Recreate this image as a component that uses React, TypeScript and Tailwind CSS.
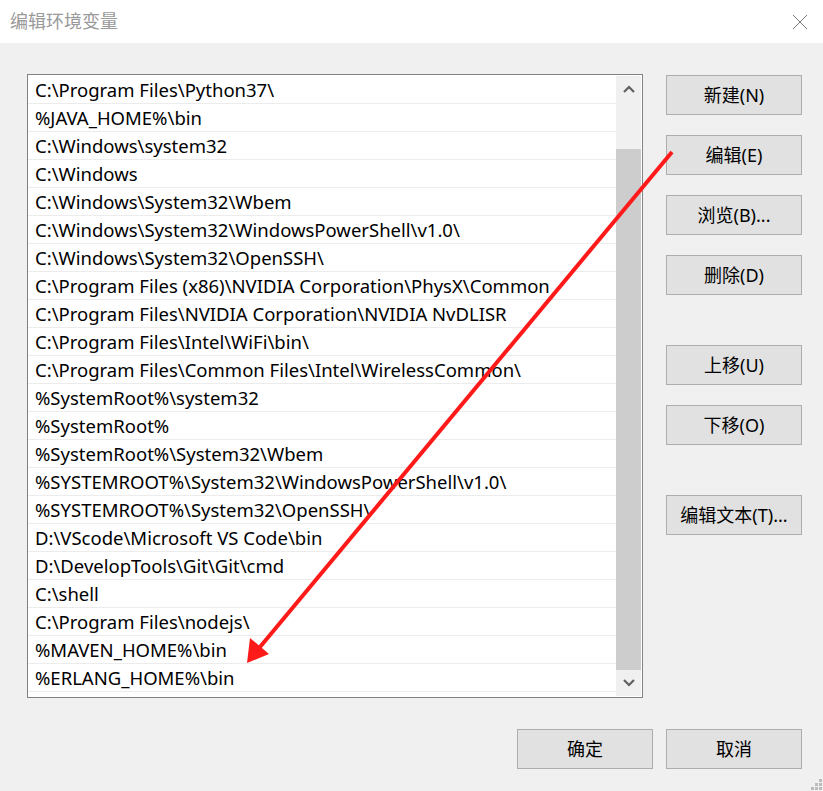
import React from "react";

const paths = [
  "C:\\Program Files\\Python37\\",
  "%JAVA_HOME%\\bin",
  "C:\\Windows\\system32",
  "C:\\Windows",
  "C:\\Windows\\System32\\Wbem",
  "C:\\Windows\\System32\\WindowsPowerShell\\v1.0\\",
  "C:\\Windows\\System32\\OpenSSH\\",
  "C:\\Program Files (x86)\\NVIDIA Corporation\\PhysX\\Common",
  "C:\\Program Files\\NVIDIA Corporation\\NVIDIA NvDLISR",
  "C:\\Program Files\\Intel\\WiFi\\bin\\",
  "C:\\Program Files\\Common Files\\Intel\\WirelessCommon\\",
  "%SystemRoot%\\system32",
  "%SystemRoot%",
  "%SystemRoot%\\System32\\Wbem",
  "%SYSTEMROOT%\\System32\\WindowsPowerShell\\v1.0\\",
  "%SYSTEMROOT%\\System32\\OpenSSH\\",
  "D:\\VScode\\Microsoft VS Code\\bin",
  "D:\\DevelopTools\\Git\\Git\\cmd",
  "C:\\shell",
  "C:\\Program Files\\nodejs\\",
  "%MAVEN_HOME%\\bin",
  "%ERLANG_HOME%\\bin",
];

function WinButton({ label, className = "" }: { label: string; className?: string }) {
  return (
    <div
      className={`flex h-[40px] w-[136px] items-center justify-center border border-[#adadad] bg-[#e1e1e1] text-[18px] text-black ${className}`}
    >
      {label}
    </div>
  );
}

function Chevron({ up }: { up?: boolean }) {
  return (
    <svg width="12" height="8" viewBox="0 0 12 8">
      <path
        d={up ? "M1 7 L6 2 L11 7" : "M1 1 L6 6 L11 1"}
        fill="none"
        stroke="#606060"
        strokeWidth="2.2"
      />
    </svg>
  );
}

export default function App() {
  return (
    <div
      className="relative h-[791px] w-[823px] overflow-hidden bg-[#f0f0f0]"
      style={{ fontFamily: '"Noto Sans", "Noto Sans CJK SC", sans-serif' }}
    >
      {/* title bar */}
      <div className="flex h-[43px] items-center justify-between bg-white pl-[10px] pr-[15px]">
        <span className="text-[18px] text-[#999999]">编辑环境变量</span>
        <svg width="16" height="16" viewBox="0 0 16 16">
          <path d="M1 1 L15 15 M15 1 L1 15" stroke="#777" strokeWidth="1" />
        </svg>
      </div>

      <div className="flex gap-[23px] pl-[27px] pt-[31px]">
        {/* list */}
        <div className="flex h-[624px] w-[616px] border border-[#828282] bg-white pt-px">
          <div className="w-[588px]">
            {paths.map((p) => (
              <div
                key={p}
                className="flex h-[28px] items-center whitespace-nowrap border-b border-[#ececec] pl-[7px] pt-[2px] text-[18.5px] leading-none text-black"
              >
                {p}
              </div>
            ))}
          </div>
          <div className="flex h-[620px] w-[25px] flex-col bg-[#f0f0f0]">
            <div className="flex h-[25px] items-center justify-center">
              <Chevron up />
            </div>
            <div className="h-[48px]" />
            <div className="h-[521px] bg-[#cdcdcd]" />
            <div className="flex h-[25px] items-center justify-center">
              <Chevron />
            </div>
          </div>
        </div>

        {/* side buttons */}
        <div className="flex flex-col gap-[20px] pt-px">
          <WinButton label="新建(N)" />
          <WinButton label="编辑(E)" />
          <WinButton label="浏览(B)..." />
          <WinButton label="删除(D)" />
          <WinButton label="上移(U)" className="mt-[30px]" />
          <WinButton label="下移(O)" />
          <WinButton label="编辑文本(T)..." className="mt-[30px]" />
        </div>
      </div>

      {/* bottom buttons */}
      <div className="mt-[31px] flex justify-end gap-[13px] pr-[21px]">
        <WinButton label="确定" />
        <WinButton label="取消" />
      </div>

      {/* annotation arrow */}
      <svg className="pointer-events-none absolute left-0 top-0" width="823" height="791">
        <line x1="672" y1="152" x2="260" y2="647" stroke="#ff1a1a" strokeWidth="4" />
        <polygon points="247,663 250,638 269,654" fill="#ff1a1a" />
      </svg>

      {/* resize grip */}
      <svg className="absolute bottom-0 right-0" width="14" height="14" viewBox="0 0 14 14">
        <rect x="10" y="2" width="3" height="3" fill="#bcbcbc" />
        <rect x="6" y="6" width="3" height="3" fill="#bcbcbc" />
        <rect x="10" y="6" width="3" height="3" fill="#bcbcbc" />
        <rect x="2" y="10" width="3" height="3" fill="#bcbcbc" />
        <rect x="6" y="10" width="3" height="3" fill="#bcbcbc" />
        <rect x="10" y="10" width="3" height="3" fill="#bcbcbc" />
      </svg>
    </div>
  );
}
